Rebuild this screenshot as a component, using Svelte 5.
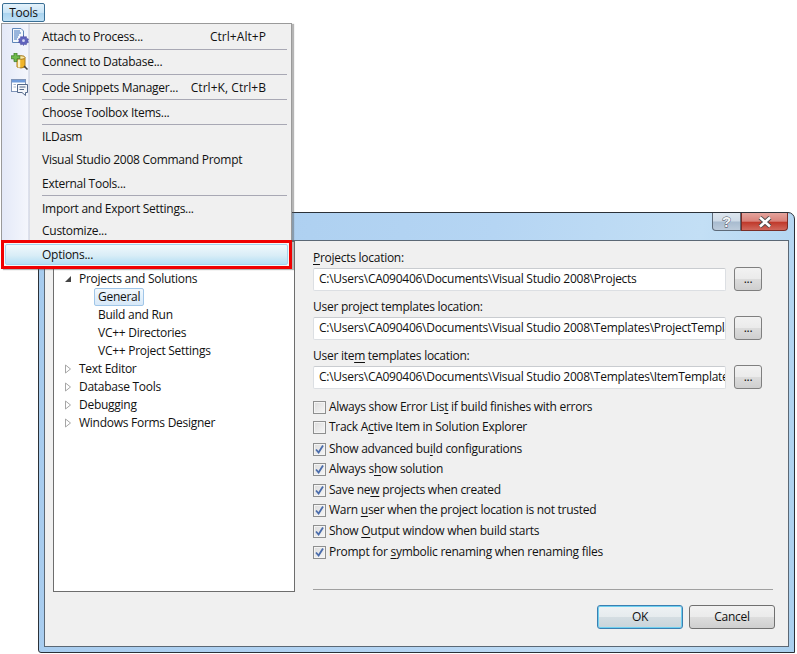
<script>
  const menu = [
    { label: 'Attach to Process...', key: 'Ctrl+Alt+P', icon: 'attach', h: 25, sep: true, lift: true },
    { label: 'Connect to Database...', icon: 'db', h: 25, sep: true, lift: true },
    { label: 'Code Snippets Manager...', key: 'Ctrl+K, Ctrl+B', icon: 'code', h: 25, sep: true },
    { label: 'Choose Toolbox Items...', h: 25, sep: true },
    { label: 'ILDasm', h: 23 },
    { label: 'Visual Studio 2008 Command Prompt', h: 23 },
    { label: 'External Tools...', h: 25, sep: true },
    { label: 'Import and Export Settings...', h: 25, sep: false },
    { label: 'Customize...', h: 22, lift: true }
  ];
  const tree = [
    { t: 'Projects and Solutions', lvl: 0, open: true },
    { t: 'General', lvl: 1, sel: true },
    { t: 'Build and Run', lvl: 1 },
    { t: 'VC++ Directories', lvl: 1 },
    { t: 'VC++ Project Settings', lvl: 1 },
    { t: 'Text Editor', lvl: 0 },
    { t: 'Database Tools', lvl: 0 },
    { t: 'Debugging', lvl: 0 },
    { t: 'Windows Forms Designer', lvl: 0 }
  ];
  const paths = [
    { a: '', u: 'P', b: 'rojects location:', v: 'C:\\Users\\CA090406\\Documents\\Visual Studio 2008\\Projects' },
    { a: 'User pro', u: 'j', b: 'ect templates location:', v: 'C:\\Users\\CA090406\\Documents\\Visual Studio 2008\\Templates\\ProjectTemplates' },
    { a: 'User ite', u: 'm', b: ' templates location:', v: 'C:\\Users\\CA090406\\Documents\\Visual Studio 2008\\Templates\\ItemTemplates' }
  ];
  const checks = [
    { a: 'Always show Error Lis', u: 't', b: ' if build finishes with errors', c: false, gap: 0 },
    { a: 'Track A', u: 'c', b: 'tive Item in Solution Explorer', c: false, gap: 2 },
    { a: 'Show advanced bu', u: 'i', b: 'ld configurations', c: true, gap: 0 },
    { a: 'Always s', u: 'h', b: 'ow solution', c: true, gap: 1 },
    { a: 'Save ne', u: 'w', b: ' projects when created', c: true, gap: 0 },
    { a: 'Warn ', u: 'u', b: 'ser when the project location is not trusted', c: true, gap: 1 },
    { a: 'Show ', u: 'O', b: 'utput window when build starts', c: true, gap: 1 },
    { a: 'Prompt for ', u: 's', b: 'ymbolic renaming when renaming files', c: true, gap: 0 }
  ];
</script>

<div class="stage">
  <button class="tools">Tools</button>

  <section class="dialog">
    <div class="caption">
      <div class="capbtns">
        <span class="help">?</span>
        <span class="close">
          <svg width="20" height="12" viewBox="0 0 20 12"><path d="M5 1.5 L15 10.5 M15 1.5 L5 10.5" stroke="#4a4a4a" stroke-width="4.4" fill="none"/><path d="M5 1.5 L15 10.5 M15 1.5 L5 10.5" stroke="#fff" stroke-width="2.6" fill="none"/></svg>
        </span>
      </div>
    </div>
    <div class="client">
      <div class="tree">
        {#each tree as n}
          <div class="node" class:sub={n.lvl === 1}>
            {#if n.lvl === 0}
              <svg class="chev" width="8" height="10" viewBox="0 0 8 10">
                {#if n.open}
                  <path d="M1 8 H7 V2 Z" fill="#444"/>
                {:else}
                  <path d="M1.5 1 L6.5 5 L1.5 9 Z" fill="#fff" stroke="#a6a6a6"/>
                {/if}
              </svg>
            {/if}
            <span class:sel={n.sel}>{n.t}</span>
          </div>
        {/each}
      </div>
      <div class="panel">
        {#each paths as p}
          <div class="field">
            <div class="flabel">{p.a}<u>{p.u}</u>{p.b}</div>
            <div class="frow">
              <div class="input"><span>{p.v}</span></div>
              <button class="dots">...</button>
            </div>
          </div>
        {/each}
        <div class="checks">
          {#each checks as c}
            <div class="check" style="margin-bottom:{c.gap}px">
              <span class="box">
                {#if c.c}
                  <svg width="11" height="11" viewBox="0 0 11 11"><path d="M2 5.5 L4.6 8.5 L9 1.5" stroke="#4a6cab" stroke-width="1.8" fill="none"/></svg>
                {/if}
              </span>
              <span>{c.a}<u>{c.u}</u>{c.b}</span>
            </div>
          {/each}
        </div>
        <div class="rule"></div>
        <div class="actions">
          <button class="btn ok">OK</button>
          <button class="btn">Cancel</button>
        </div>
      </div>
    </div>
  </section>

  <nav class="menu">
    {#each menu as m}
      <div class="item" class:lift={m.lift} style="height:{m.h}px">
        <span class="icon">
          {#if m.icon === 'attach'}
            <svg width="18" height="18" viewBox="0 0 18 18"><path d="M1.5 .5 H10 L12.5 3 V14.5 H1.5 Z" fill="#f3f7fc" stroke="#5f86b8"/><path d="M3 3 H9 M3 5 H10 M3 7 H8 M3 9 H7 M3 11 H6" stroke="#3f74bd"/><path d="M12.5 7.5 l1 1.6 1.8-.5 .4 1.8 1.8.6-.7 1.7 .7 1.7-1.8.6-.4 1.8-1.8-.5-1 1.2-1-1.2-1.8.5-.4-1.8-1.8-.6 .7-1.7-.7-1.7 1.8-.6 .4-1.8 1.8 .5 Z" fill="#5f63bd" stroke="#44479a" stroke-width=".5"/><circle cx="12.5" cy="12.7" r="1.4" fill="#d7d9f2"/></svg>
          {:else if m.icon === 'db'}
            <svg width="18" height="18" viewBox="0 0 18 18"><path d="M6 4.5 H14 V14 Q10 16 6 14 Z" fill="#f0b429" stroke="#a87b1c"/><ellipse cx="10" cy="4.5" rx="4" ry="1.8" fill="#fbe9a8" stroke="#a87b1c"/><path d="M8 6.5 V14.5" stroke="#fdf2c8" stroke-width="2.4"/><path d="M3 0 H6 V2.8 H8.8 V5.8 H6 V8.6 H3 V5.8 H.2 V2.8 H3 Z" fill="#6fbb4c" stroke="#3d7a2b" stroke-width=".8"/><path d="M13 13 L16.5 16.5" stroke="#444" stroke-width="1.6"/></svg>
          {:else if m.icon === 'code'}
            <svg width="18" height="18" viewBox="0 0 18 18"><rect x=".5" y=".5" width="14" height="12" fill="#fff" stroke="#7f94b8"/><rect x="1" y="1" width="13" height="2.5" fill="#6f9bdc"/><path d="M2.5 5.5 H5 M2.5 8 H5" stroke="#a9b6cc"/><path d="M6.5 5.5 H16.5 V13.5 H14.5 V16.5 L11 13.5 H6.5 Z" fill="#f4f6fa" stroke="#55698a"/><path d="M8.5 8 H14.5 M8.5 10.5 H13" stroke="#55698a"/></svg>
          {/if}
        </span>
        <span class="mlabel">{m.label}</span>
        {#if m.key}<span class="mkey">{m.key}</span>{/if}
        {#if m.sep}<i class="sep"></i>{/if}
      </div>
    {/each}
    <div class="optwrap"><div class="opt">Options...</div></div>
  </nav>
</div>

<style>
  :global(body) { margin: 0; background: #fff; }
  .stage {
    position: relative;
    width: 797px;
    height: 654px;
    overflow: hidden;
    font: 12px/16px "Open Sans", "Noto Sans", sans-serif;
    letter-spacing: -0.27px;
    color: #111;
  }
  button { font: inherit; letter-spacing: inherit; color: inherit; padding: 0; }
  u { text-underline-offset: 2px; }

  .tools {
    display: block;
    margin: 3px 0 0 2px;
    width: 43px;
    height: 19px;
    border: 1px solid #3a6f95;
    border-radius: 2px;
    background: linear-gradient(#e4f2fb, #c9e4f6 50%, #a9d3ef 51%, #bfe0f5);
  }

  .menu {
    position: absolute;
    left: 1px;
    top: 23px;
    width: 291px;
    height: 246px;
    box-sizing: border-box;
    padding: 1px 4px 0;
    background: linear-gradient(90deg, #e4e9f8, #f4f6fc 26px, #c5cbdd 27px, #f0f0f0 28px);
    background-repeat: no-repeat;
    border: 1px solid #9a9a9a;
    border-bottom: 0;
    box-shadow: 2px 1px 1px rgba(90, 90, 90, .45);
  }
  .item {
    position: relative;
    display: flex;
    align-items: center;
    box-sizing: border-box;
    padding-right: 21px;
  }
  .item.lift { padding-bottom: 2px; }
  .icon { width: 36px; flex: none; display: flex; padding-left: 5px; box-sizing: border-box; }
  .mlabel { flex: 1; white-space: nowrap; }
  .mkey { white-space: nowrap; letter-spacing: 0.05px; }
  .sep {
    position: absolute;
    left: 36px;
    right: 0;
    bottom: 0;
    height: 1px;
    background: #a8a8b4;
  }
  .optwrap {
    position: absolute;
    left: -1px;
    right: -1px;
    bottom: 0;
    height: 29px;
    box-sizing: border-box;
    border: 3px solid #f00000;
    padding: 1px;
    background: #f6f6f6;
  }
  .opt {
    height: 21px;
    box-sizing: border-box;
    border: 1px solid #a6d3ee;
    border-radius: 2px;
    padding-left: 36px;
    line-height: 19px;
    background: linear-gradient(#f0f8fc, #d9edf7 55%, #b5dff4);
  }

  .dialog {
    position: absolute;
    left: 38px;
    top: 212px;
    width: 757px;
    height: 441px;
    box-sizing: border-box;
    border: 1px solid #2b3138;
    border-radius: 5px 7px 0 3px;
    background: linear-gradient(100deg, #a6cbee, #b5d5f3 55%, #c3dff5 80%, #a9cfee);
    padding: 0 5px 5px;
    display: flex;
    flex-direction: column;
  }
  .caption { height: 27px; flex: none; display: flex; justify-content: flex-end; }
  .capbtns { display: flex; margin-right: 1px; height: 18px; }
  .help {
    width: 29px;
    box-sizing: border-box;
    border: 1px solid #5d6a78;
    border-top: 0;
    border-radius: 0 0 0 4px;
    background: linear-gradient(#dde6ef, #cfdbe7 48%, #a8bbcf 52%, #bccbdb);
    font: bold 15px/17px "Liberation Sans", sans-serif;
    letter-spacing: 0;
    color: #f4f6f8;
    -webkit-text-stroke: 0.8px #3a424c;
    paint-order: stroke fill;
    text-align: center;
  }
  .close {
    width: 47px;
    box-sizing: border-box;
    border: 1px solid #7a2d26;
    border-top: 0;
    border-radius: 0 0 4px 0;
    background: linear-gradient(#e4a49d, #d9827a 48%, #c0392b 55%, #d0685c);
    display: flex;
    align-items: center;
    justify-content: center;
  }
  .client {
    flex: 1;
    display: flex;
    border: 1px solid #5b6875;
    background: #f0f0f0;
    padding: 0 16px 0 8px;
    min-height: 0;
  }
  .tree {
    width: 242px;
    height: 351px;
    box-sizing: border-box;
    background: #fff;
    border: 1px solid #6d6d6d;
    padding-top: 28px;
    flex: none;
  }
  .node {
    height: 18px;
    display: flex;
    align-items: center;
    padding-left: 10px;
    line-height: 18px;
    white-space: nowrap;
  }
  .node.sub { padding-left: 41px; }
  .chev { margin-right: 4px; flex: none; }
  .node span { padding: 0 3px; }
  .sel {
    border: 1px solid #a0c6e8;
    border-radius: 2px;
    background: linear-gradient(#f2f8fd, #d7e8f8);
    margin-left: -1px;
    line-height: 16px;
  }

  .panel {
    margin-left: 18px;
    width: 460px;
    display: flex;
    flex-direction: column;
    padding-top: 9px;
  }
  .field { height: 49px; }
  .flabel { height: 16px; line-height: 16px; }
  .frow { display: flex; gap: 8px; align-items: center; height: 26px; }
  .input {
    width: 413px;
    height: 23px;
    box-sizing: border-box;
    border: 1px solid #dcdfe3;
    border-top-color: #c9ccd0;
    border-radius: 2px;
    background: #fff;
    padding: 0 0 0 5px;
    line-height: 19px;
    overflow: hidden;
    white-space: nowrap;
  }
  .dots {
    width: 28px;
    height: 24px;
    border: 1px solid #7f7f7f;
    border-radius: 3px;
    background: linear-gradient(#f2f2f2, #ebebeb 48%, #dcdcdc 52%, #cfcfcf);
    line-height: 18px;
  }
  .checks { display: flex; flex-direction: column; }
  .check { display: flex; align-items: center; white-space: nowrap; height: 20px; }
  .box {
    width: 13px;
    height: 13px;
    box-sizing: border-box;
    border: 1px solid #8e8f8f;
    margin-right: 3px;
    background: linear-gradient(135deg, #dcdcdc, #f6f6f6);
    outline: 1px solid #f4f4f4;
    outline-offset: -2px;
    display: flex;
    align-items: center;
    justify-content: center;
  }
  .rule { height: 1px; background: #a0a0a0; margin-top: 27px; flex: none; }
  .actions { display: flex; gap: 6px; margin-top: 15px; padding-left: 284px; }
  .btn {
    width: 86px;
    height: 24px;
    flex: none;
    border: 1px solid #707070;
    border-radius: 3px;
    background: linear-gradient(#f2f2f2, #ebebeb 48%, #dddddd 52%, #cfcfcf);
  }
  .ok {
    border-color: #3c7fb1;
    box-shadow: inset 0 0 0 1px #6fd0f0;
    background: linear-gradient(#eef2f4, #e6ebee 48%, #d4dde2 52%, #c9d4da);
  }
</style>
